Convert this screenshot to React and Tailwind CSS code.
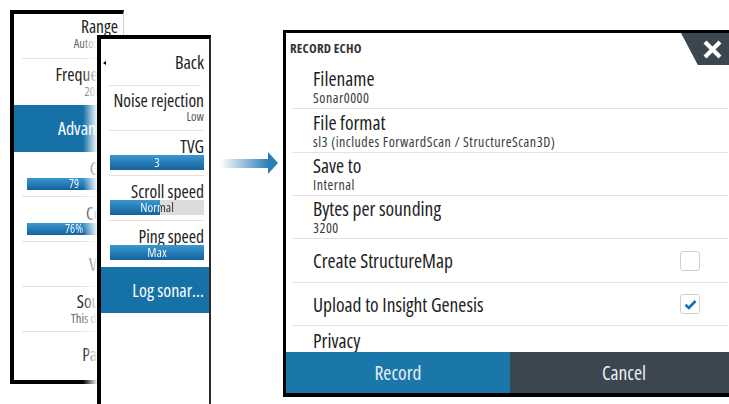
const font = "font-['Open_Sans',sans-serif] font-stretch-condensed";

const mainMenu = [
  { label: "Range", sub: "Auto: 40 ft", subClass: "text-[#3aa655]", first: true },
  { label: "Frequency", sub: "200 kHz" },
  { label: "Advanced", active: true },
  { label: "Gain", bar: "79" },
  { label: "Color", bar: "76%" },
  { label: "View" },
  { label: "Source", sub: "This device" },
  { label: "Pause" },
];

const advancedMenu = [
  { label: "Noise rejection", sub: "Low" },
  { label: "TVG", bar: "3", fill: 100 },
  { label: "Scroll speed", bar: "Normal", fill: 53 },
  { label: "Ping speed", bar: "Max", fill: 100 },
];

const fields = [
  { label: "Filename", value: "Sonar0000", h: "h-[44px]" },
  { label: "File format", value: "sl3 (includes ForwardScan / StructureScan3D)", h: "h-[44px]" },
  { label: "Save to", value: "Internal", h: "h-[43px]" },
  { label: "Bytes per sounding", value: "3200", h: "h-[43px]" },
  { label: "Create StructureMap", check: false, h: "h-[44px]" },
  { label: "Upload to Insight Genesis", check: true, h: "h-[43px]" },
];

// slider bar: blue fill over grey track, label tinted white over the fill and dark over the track
function Bar({ text, fill = 100, h = "h-[15px]", size = "text-[13px]" }) {
  return (
    <div className={`relative w-full ${h} bg-[#dcdcdc] ${size} leading-none`}>
      <div
        className="absolute inset-y-0 left-0 bg-linear-to-b from-[#3a98d1] to-[#14629c]"
        style={{ width: fill + "%" }}
      />
      <div
        className="relative h-full w-full flex items-center justify-center bg-clip-text text-transparent"
        style={{ backgroundImage: `linear-gradient(to right, #fff ${fill}%, #333 ${fill}%)` }}
      >
        {text}
      </div>
    </div>
  );
}

function CheckBox({ checked }) {
  return (
    <div className="w-[20px] h-[20px] border border-[#cfcfcf] rounded-[3px] bg-white flex items-center justify-center">
      {checked && (
        <svg width="13" height="11" viewBox="0 0 13 11">
          <path d="M1.5 5.8 L4.8 9 L11.5 2" fill="none" stroke="#1a6fa8" strokeWidth="2.6" />
        </svg>
      )}
    </div>
  );
}

export default function App() {
  return (
    <div className={`relative w-[729px] h-[404px] overflow-hidden bg-white ${font}`}>
      {/* sonar menu */}
      <div className="absolute left-[10px] top-[10px] w-[114px] h-[374px] border-4 border-r border-black border-r-[#cfcfcf] bg-white flex flex-col text-[#222]">
        {mainMenu.map((item, i) =>
          item.active ? (
            <div key={i} className="h-[47px] mt-[1px] bg-[#1571a6] text-white text-[18px] flex items-center justify-end pr-[5px]">
              {item.label}
            </div>
          ) : (
            <div
              key={i}
              className={`h-[45px] shrink-0 ml-[8px] flex flex-col justify-center items-end pr-[5px] ${item.first ? "pb-[5px]" : ""} ${
                i < mainMenu.length - 1 && !mainMenu[i + 1].active ? "border-b border-[#e6e0e0]" : ""
              }`}
            >
              <div className="text-[17.5px] leading-[19px]">{item.label}</div>
              {item.sub && <div className={`text-[12.5px] leading-[15px] text-[#666] ${item.subClass || ""}`}>{item.sub}</div>}
              {item.bar && (
                <div className="w-[94px] mr-[-3px]">
                  <Bar text={item.bar} h="h-[12px]" size="text-[12px]" />
                </div>
              )}
            </div>
          )
        )}
      </div>
      {/* shadow cast by the advanced menu */}
      <div className="absolute left-[83px] top-[35px] w-[14px] h-[355px] bg-linear-to-r from-white/0 to-white/95" />

      {/* advanced menu */}
      <div className="absolute left-[97px] top-[35px] w-[114px] h-[380px] border-l-4 border-t-4 border-r-2 border-l-black border-t-black border-r-[#2a2a2a] bg-white flex flex-col text-[#222]">
        <div className="relative h-[47px] mx-[8px] border-b border-[#e6e0e0] flex items-center justify-end">
          <div className="absolute left-[-6px] top-[22px] w-0 h-0 border-y-[2.5px] border-y-transparent border-r-[3px] border-r-black" />
          <span className="text-[18px] mr-[-3px]">Back</span>
        </div>
        {advancedMenu.map((item, i) => (
          <div
            key={i}
            className={`h-[45px] shrink-0 ml-[8px] mr-[5px] flex flex-col justify-center items-end ${
              i < advancedMenu.length - 1 ? "border-b border-[#e6e0e0]" : ""
            }`}
          >
            <div className="text-[17.5px] leading-[18px]">{item.label}</div>
            {item.sub && <div className="text-[12.5px] leading-[16px] text-[#555]">{item.sub}</div>}
            {item.bar && (
              <div className="w-[94px]">
                <Bar text={item.bar} fill={item.fill} />
              </div>
            )}
          </div>
        ))}
        <div className="h-[46px] mt-[1px] bg-[#1571a6] text-white text-[18px] flex items-center justify-end pr-[5px]">
          Log sonar...
        </div>
      </div>

      {/* arrow */}
      <svg className="absolute left-[220px] top-[150px]" width="60" height="26" viewBox="0 0 60 26">
        <defs>
          <linearGradient id="shaft" x1="0" x2="1" y1="0" y2="0">
            <stop offset="0" stopColor="#2a7db5" stopOpacity="0" />
            <stop offset="1" stopColor="#2a7db5" />
          </linearGradient>
        </defs>
        <rect x="0" y="9" width="49" height="9" fill="url(#shaft)" />
        <path d="M48 2 L58 13 L48 24 Z" fill="#2a7db5" />
      </svg>

      {/* record echo dialog */}
      <div className="absolute left-[283px] top-[30px] w-[455px] border-l-[3px] border-t-[3px] border-b-4 border-black bg-white flex flex-col text-[#1e1e1e]">
        <div className="relative h-[32px] flex items-center pl-[4px]">
          <span className="text-[13px] font-bold text-[#333] tracking-[0.2px]">RECORD ECHO</span>
          <div className="absolute right-[6px] top-0 w-[51px] h-[32px] bg-[#3b4650] [clip-path:polygon(0_0,100%_0,100%_100%,33%_100%)] flex items-center justify-end pr-[10px]">
            <svg width="19" height="19" viewBox="0 0 19 19">
              <path d="M2 2 L17 17 M17 2 L2 17" stroke="white" strokeWidth="4.2" />
            </svg>
          </div>
        </div>
        {fields.map((f, i) => (
          <div key={i} className={`${f.h} ml-[6px] mr-[10px] border-b border-[#e6e2e2] flex items-center pl-[21px]`}>
            <div className="flex-1 flex flex-col">
              <div className="text-[19.5px] leading-[21px]">{f.label}</div>
              {f.value && <div className="text-[14px] leading-[17px] tracking-[0.5px] text-[#3a3a3a]">{f.value}</div>}
            </div>
            {f.check !== undefined && (
              <div className="mr-[28px]">
                <CheckBox checked={f.check} />
              </div>
            )}
          </div>
        ))}
        <div className="h-[26px] overflow-hidden ml-[6px] pl-[21px] pt-[4px] text-[19.5px] leading-[21px]">Privacy</div>
        <div className="flex h-[41px] text-[19.5px] text-[#e9eef2]">
          <div className="w-[224px] bg-[#1b76a9] flex items-center justify-center">Record</div>
          <div className="flex-1 bg-[#3c4650] flex items-center justify-center">Cancel</div>
        </div>
      </div>
    </div>
  );
}
